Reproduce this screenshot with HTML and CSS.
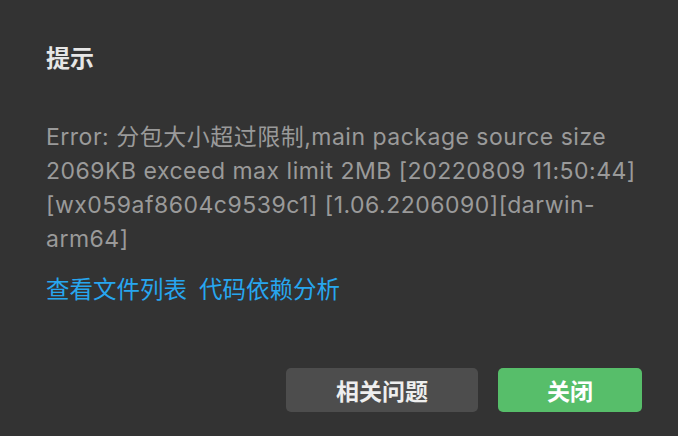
FILE: index.html
```html
<!DOCTYPE html>
<html lang="zh-CN">
<head>
  <meta charset="UTF-8" />
  <meta name="viewport" content="width=device-width, initial-scale=1.0" />
  <title>提示</title>
  <link rel="stylesheet" href="styles.css">
</head>
<body>
  <div class="dialog">
    <div class="dialog-body">
      <div class="title">提示</div>
      <div class="message">Error: 分包大小超过限制,main package source size 2069KB exceed max limit 2MB [20220809 11:50:44] [wx059af8604c9539c1] [1.06.2206090][darwin-arm64]</div>
      <div class="links">
        <a href="#" class="link">查看文件列表</a>
        <a href="#" class="link">代码依赖分析</a>
      </div>
    </div>
    <div class="footer">
      <button class="btn btn-default">相关问题</button>
      <button class="btn btn-primary">关闭</button>
    </div>
  </div>
</body>
</html>
```

FILE: styles.css
```css
:root {
  --bg: #333333;
  --title: #e6e6e6;
  --text: #9a9a9a;
  --link: #27a6ef;
  --btn-gray: #4d4d4d;
  --btn-green: #57be6a;
}

body {
  margin: 0;
  padding: 0;
  background-color: var(--bg);
  font-family: Inter, 'Noto Sans CJK SC', sans-serif;
}

.dialog {
  width: 678px;
  height: 436px;
  display: flex;
  flex-direction: column;
  box-sizing: border-box;
}

.dialog-body {
  padding: 42px 32px 0 46px;
}

.title {
  font-size: 24px;
  line-height: 34px;
  font-weight: bold;
  color: var(--title);
}

.message {
  margin-top: 44px;
  font-size: 23px;
  line-height: 34px;
  letter-spacing: 0.5px;
  color: var(--text);
}

.links {
  margin-top: 17px;
  font-size: 23.5px;
  line-height: 34px;
  display: flex;
  gap: 12px;
}

.link {
  color: var(--link);
  text-decoration: none;
}

.footer {
  margin-top: auto;
  padding: 0 36px 24px 0;
  display: flex;
  justify-content: flex-end;
  gap: 20px;
}

.btn {
  height: 44px;
  border: none;
  border-radius: 5px;
  color: #ffffff;
  font-family: inherit;
  font-size: 23px;
  font-weight: bold;
  cursor: pointer;
}

.btn-default {
  width: 192px;
  background-color: var(--btn-gray);
  color: #eeeeee;
}

.btn-primary {
  width: 144px;
  background-color: var(--btn-green);
}
```
